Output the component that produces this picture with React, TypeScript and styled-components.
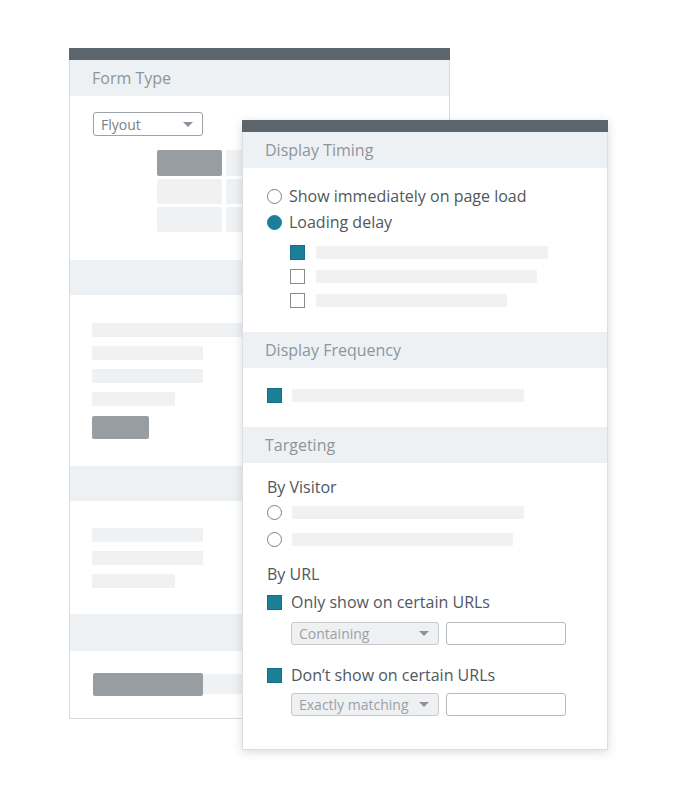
import styled, { createGlobalStyle } from 'styled-components'

const TEAL = '#1b7f98'
const DARK_BAR = '#5d656c'
const BAND = '#eef1f3'
const SKELETON = '#eff1f3'
const SKELETON_DARK = '#989da2'

const GlobalStyle = createGlobalStyle`
  body {
    margin: 0;
    background: #ffffff;
    font-family: 'Open Sans', 'Liberation Sans', sans-serif;
  }
`

const Stage = styled.div`
  position: relative;
  width: 677px;
  height: 800px;
  padding: 48px 0 0 69px;
  box-sizing: border-box;
`

const Card = styled.div`
  display: flex;
  flex-direction: column;
  box-sizing: border-box;
  background: #ffffff;
  border: 1px solid #d9dcdf;
  border-top: none;
`

const BackCard = styled(Card)`
  width: 381px;
  height: 671px;
`

const FrontCard = styled(Card)`
  position: absolute;
  left: 242px;
  top: 120px;
  width: 366px;
  height: 630px;
  border-color: #dcdfe2;
  box-shadow: 0 2px 9px rgba(40, 50, 60, 0.18);
`

const TopBar = styled.div`
  height: 12px;
  margin: 0 -1px;
  background: ${DARK_BAR};
`

const Band = styled.div<{ $h?: number }>`
  height: ${(p) => p.$h ?? 36}px;
  line-height: ${(p) => p.$h ?? 36}px;
  padding-left: 22px;
  background: ${BAND};
  color: #8d959b;
  font-size: 16px;
`

const Section = styled.div<{ $pad: string; $gap?: number }>`
  display: flex;
  flex-direction: column;
  align-items: flex-start;
  padding: ${(p) => p.$pad};
  gap: ${(p) => p.$gap ?? 0}px;
`

const Bar = styled.div<{ $w: number; $h?: number; $dark?: boolean }>`
  width: ${(p) => p.$w}px;
  height: ${(p) => p.$h ?? 14}px;
  background: ${(p) => (p.$dark ? SKELETON_DARK : SKELETON)};
  border-radius: ${(p) => (p.$dark ? 2 : 1)}px;
`

const Select = styled.div<{ $w: number; $muted?: boolean }>`
  display: flex;
  align-items: center;
  justify-content: space-between;
  box-sizing: border-box;
  width: ${(p) => p.$w}px;
  height: ${(p) => (p.$muted ? 23 : 24)}px;
  padding: 0 9px 0 7px;
  border: 1px solid ${(p) => (p.$muted ? '#c6cace' : '#9da2a7')};
  border-radius: 3px;
  background: ${(p) => (p.$muted ? '#eef0f2' : '#ffffff')};
  color: ${(p) => (p.$muted ? '#9ba1a7' : '#7b8187')};
  font-size: 14px;
`

const Arrow = styled.span`
  width: 0;
  height: 0;
  border-left: 5px solid transparent;
  border-right: 5px solid transparent;
  border-top: 5px solid #8c9297;
`

const BlockGrid = styled.div`
  display: grid;
  grid-template-columns: repeat(3, 65px);
  grid-template-rows: 26px 25px 25px;
  gap: 3px 4px;
  margin: 14px 0 0 64px;
`

const Block = styled.div<{ $dark?: boolean }>`
  background: ${(p) => (p.$dark ? SKELETON_DARK : SKELETON)};
  border-radius: 2px;
`

const ButtonRow = styled.div`
  display: flex;
`

const Row = styled.div<{ $indent?: number; $gap?: number }>`
  display: flex;
  align-items: center;
  gap: ${(p) => p.$gap ?? 7}px;
  margin-left: ${(p) => p.$indent ?? 0}px;
  height: 20px;
  color: #50575d;
  font-size: 16px;
`

const Radio = styled.span<{ $on?: boolean }>`
  flex: none;
  box-sizing: border-box;
  width: 15px;
  height: 15px;
  border-radius: 50%;
  border: 1.5px solid ${(p) => (p.$on ? TEAL : '#7d8389')};
  background: ${(p) => (p.$on ? TEAL : '#ffffff')};
`

const Check = styled.span<{ $on?: boolean }>`
  flex: none;
  box-sizing: border-box;
  width: 15px;
  height: 15px;
  border: 1px solid ${(p) => (p.$on ? '#176d83' : '#858b91')};
  background: ${(p) => (p.$on ? TEAL : '#ffffff')};
`

const Heading = styled.div`
  height: 20px;
  line-height: 20px;
  color: #50575d;
  font-size: 16px;
`

const UrlFilter = styled.div<{ $top: number }>`
  display: flex;
  gap: 7px;
  margin: ${(p) => p.$top}px 0 0 24px;
`

const TextInput = styled.div`
  box-sizing: border-box;
  width: 120px;
  height: 23px;
  border: 1px solid #b3b8bd;
  border-radius: 3px;
  background: #ffffff;
`

export default function App() {
  return (
    <>
      <GlobalStyle />
      <Stage>
        <BackCard>
          <TopBar />
          <Band>Form Type</Band>
          <Section $pad="16px 0 28px 23px">
            <Select $w={110}>
              Flyout
              <Arrow />
            </Select>
            <BlockGrid>
              <Block $dark />
              <Block />
              <Block />
              <Block />
              <Block />
              <Block />
              <Block />
              <Block />
              <Block />
            </BlockGrid>
          </Section>
          <Band $h={35} />
          <Section $pad="28px 0 27px 22px" $gap={9}>
            <Bar $w={334} />
            <Bar $w={111} />
            <Bar $w={111} />
            <Bar $w={83} />
            <Bar $w={57} $h={23} $dark style={{ marginTop: 1 }} />
          </Section>
          <Band $h={35} />
          <Section $pad="27px 0 26px 22px" $gap={9}>
            <Bar $w={111} />
            <Bar $w={111} />
            <Bar $w={83} />
          </Section>
          <Band $h={37} />
          <Section $pad="22px 0 0 23px">
            <ButtonRow>
              <Bar $w={110} $h={23} $dark />
              <Bar $w={220} $h={20} style={{ marginTop: 1 }} />
            </ButtonRow>
          </Section>
        </BackCard>

        <FrontCard>
          <TopBar />
          <Band>Display Timing</Band>
          <Section $pad="18px 0 22px 24px" $gap={6}>
            <Row>
              <Radio />
              Show immediately on page load
            </Row>
            <Row>
              <Radio $on />
              Loading delay
            </Row>
            <Section $pad="4px 0 0 23px" $gap={4}>
              <Row $gap={11}>
                <Check $on />
                <Bar $w={232} $h={13} />
              </Row>
              <Row $gap={11}>
                <Check />
                <Bar $w={221} $h={13} />
              </Row>
              <Row $gap={11}>
                <Check />
                <Bar $w={191} $h={13} />
              </Row>
            </Section>
          </Section>
          <Band>Display Frequency</Band>
          <Section $pad="17px 0 22px 24px">
            <Row $gap={10}>
              <Check $on />
              <Bar $w={232} $h={13} />
            </Row>
          </Section>
          <Band>Targeting</Band>
          <Section $pad="14px 0 0 24px">
            <Heading>By Visitor</Heading>
            <Row $gap={10} style={{ marginTop: 5 }}>
              <Radio />
              <Bar $w={232} $h={13} />
            </Row>
            <Row $gap={10} style={{ marginTop: 7 }}>
              <Radio />
              <Bar $w={221} $h={13} />
            </Row>
            <Heading style={{ marginTop: 15 }}>By URL</Heading>
            <Row $gap={9} style={{ marginTop: 8 }}>
              <Check $on />
              Only show on certain URLs
            </Row>
            <UrlFilter $top={10}>
              <Select $w={148} $muted>
                Containing
                <Arrow />
              </Select>
              <TextInput />
            </UrlFilter>
            <Row $gap={9} style={{ marginTop: 20 }}>
              <Check $on />
              Don’t show on certain URLs
            </Row>
            <UrlFilter $top={8}>
              <Select $w={148} $muted>
                Exactly matching
                <Arrow />
              </Select>
              <TextInput />
            </UrlFilter>
          </Section>
        </FrontCard>
      </Stage>
    </>
  )
}
